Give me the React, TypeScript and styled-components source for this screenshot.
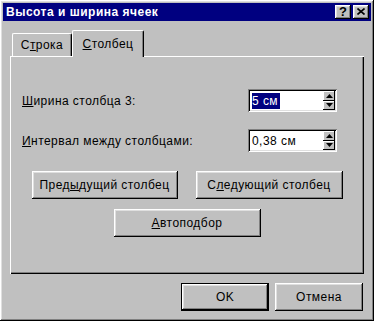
import React from "react";
import styled, { createGlobalStyle } from "styled-components";

const GlobalStyle = createGlobalStyle`
  html, body {
    margin: 0;
    padding: 0;
    background: #c0c0c0;
  }
  * {
    box-sizing: border-box;
  }
`;

const raised = `
  box-shadow: inset -1px -1px #000, inset 1px 1px #fff,
    inset -2px -2px #808080, inset 2px 2px #dfdfdf;
`;

const sunken = `
  box-shadow: inset 1px 1px #808080, inset -1px -1px #fff,
    inset 2px 2px #000, inset -2px -2px #dfdfdf;
`;

const Window = styled.div`
  width: 374px;
  height: 321px;
  padding: 3px;
  background: #c0c0c0;
  ${raised}
  display: flex;
  flex-direction: column;
  font-family: "Liberation Sans", Arial, sans-serif;
  font-size: 12px;
  letter-spacing: 0.45px;
  color: #000;
`;

const TitleBar = styled.div`
  height: 18px;
  background: #000080;
  color: #fff;
  font-weight: bold;
  font-size: 12px;
  letter-spacing: 0.5px;
  display: flex;
  align-items: center;
  justify-content: space-between;
  padding: 0 2px 0 3px;
`;

const CaptionButtons = styled.div`
  display: flex;
  gap: 2px;
`;

const CaptionButton = styled.div`
  width: 16px;
  height: 14px;
  background: #c0c0c0;
  ${raised}
  color: #000;
  display: flex;
  align-items: center;
  justify-content: center;
  font-size: 13px;
  font-weight: bold;
  letter-spacing: 0;
  line-height: 1;
  padding-bottom: 1px;
`;

const Body = styled.div`
  flex: 1;
  display: flex;
  flex-direction: column;
  padding: 9px 7px 7px;
`;

const TabStrip = styled.div`
  display: flex;
  align-items: flex-end;
  height: 26px;
  padding-left: 2px;
`;

const Tab = styled.div<{ $active?: boolean; $width: number }>`
  position: relative;
  z-index: ${(p) => (p.$active ? 1 : 0)};
  width: ${(p) => p.$width}px;
  height: ${(p) => (p.$active ? 27 : 23)}px;
  margin-bottom: ${(p) => (p.$active ? -1 : 0)}px;
  background: #c0c0c0;
  border-top: 1px solid #fff;
  border-left: 1px solid #fff;
  border-right: 1px solid #000;
  border-radius: 2px 2px 0 0;
  box-shadow: inset -1px 0 #808080;
  display: flex;
  justify-content: center;
  padding-top: ${(p) => (p.$active ? 6 : 4)}px;
`;

const Panel = styled.div`
  height: 218px;
  background: #c0c0c0;
  box-shadow: inset 1px 1px #fff, inset -1px -1px #000,
    inset -2px -2px #808080;
  display: flex;
  flex-direction: column;
`;

const Fields = styled.div`
  display: flex;
  flex-direction: column;
  gap: 17px;
  padding: 33px 27px 0 12px;
`;

const FieldRow = styled.div`
  display: grid;
  grid-template-columns: 1fr 89px;
  align-items: center;
  height: 23px;
`;

const SpinBox = styled.div`
  height: 23px;
  background: #fff;
  ${sunken}
  display: flex;
  align-items: center;
  justify-content: space-between;
  padding: 2px 2px 2px 4px;
`;

const SpinText = styled.span<{ $selected?: boolean }>`
  background: ${(p) => (p.$selected ? "#000080" : "transparent")};
  color: ${(p) => (p.$selected ? "#fff" : "#000")};
  line-height: 16px;
  padding-right: ${(p) => (p.$selected ? 2 : 0)}px;
`;

const Arrows = styled.div`
  display: flex;
  flex-direction: column;
  width: 12px;
  height: 19px;
`;

const ArrowButton = styled.div`
  flex: 1;
  background: #c0c0c0;
  box-shadow: inset -1px -1px #000, inset 1px 1px #fff;
  display: flex;
  align-items: center;
  justify-content: center;
`;

const ButtonsArea = styled.div`
  display: flex;
  flex-direction: column;
  align-items: center;
  gap: 10px;
  margin-top: 19px;
`;

const ButtonRow = styled.div`
  display: flex;
  gap: 18px;
`;

const PushButton = styled.div<{ $width: number; $default?: boolean }>`
  width: ${(p) => p.$width}px;
  height: 28px;
  background: #c0c0c0;
  display: flex;
  align-items: center;
  justify-content: center;
  ${(p) =>
    p.$default
      ? `box-shadow: inset 0 0 0 1px #000, inset -2px -2px #000, inset 2px 2px #fff,
    inset -3px -3px #808080, inset 3px 3px #dfdfdf;`
      : raised}
`;

const Footer = styled.div`
  display: flex;
  justify-content: flex-end;
  gap: 6px;
  margin-top: 9px;
  padding-right: 1px;
`;

const Arrow = ({ up }: { up?: boolean }) => (
  <svg width="7" height="4" viewBox="0 0 7 4">
    <polygon points={up ? "3.5,0 7,4 0,4" : "0,0 7,0 3.5,4"} fill="#000" />
  </svg>
);

const Spin = ({ value, selected }: { value: string; selected?: boolean }) => (
  <SpinBox>
    <SpinText $selected={selected}>{value}</SpinText>
    <Arrows>
      <ArrowButton>
        <Arrow up />
      </ArrowButton>
      <ArrowButton>
        <Arrow />
      </ArrowButton>
    </Arrows>
  </SpinBox>
);

export default function App() {
  return (
    <>
      <GlobalStyle />
      <Window>
        <TitleBar>
          <span>Высота и ширина ячеек</span>
          <CaptionButtons>
            <CaptionButton>?</CaptionButton>
            <CaptionButton>
              <svg width="8" height="7" viewBox="0 0 8 7">
                <path d="M0.5 0.5 L7.5 6.5 M7.5 0.5 L0.5 6.5" stroke="#000" strokeWidth="1.6" />
              </svg>
            </CaptionButton>
          </CaptionButtons>
        </TitleBar>
        <Body>
          <TabStrip>
            <Tab $width={60}>
              С<u>т</u>рока
            </Tab>
            <Tab $active $width={72}>
              <span>
                <u>С</u>толбец
              </span>
            </Tab>
          </TabStrip>
          <Panel>
            <Fields>
              <FieldRow>
                <span>
                  <u>Ш</u>ирина столбца 3:
                </span>
                <Spin value="5 см" selected />
              </FieldRow>
              <FieldRow>
                <span>
                  <u>И</u>нтервал между столбцами:
                </span>
                <Spin value="0,38 см" />
              </FieldRow>
            </Fields>
            <ButtonsArea>
              <ButtonRow>
                <PushButton $width={146}>
                  <span>
                    Пред<u>ы</u>дущий столбец
                  </span>
                </PushButton>
                <PushButton $width={147}>
                  <span>
                    С<u>л</u>едующий столбец
                  </span>
                </PushButton>
              </ButtonRow>
              <PushButton $width={147}>
                <span>
                  <u>А</u>втоподбор
                </span>
              </PushButton>
            </ButtonsArea>
          </Panel>
          <Footer>
            <PushButton $width={88} $default>
              OK
            </PushButton>
            <PushButton $width={88}>Отмена</PushButton>
          </Footer>
        </Body>
      </Window>
    </>
  );
}
